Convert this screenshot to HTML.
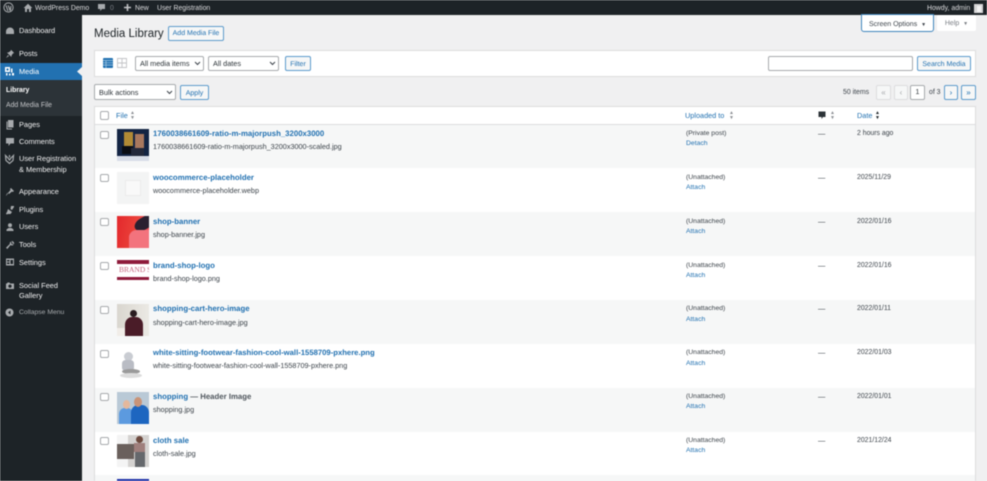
<!DOCTYPE html>
<html><head><meta charset="utf-8"><style>
html,body{margin:0;padding:0;width:987px;height:481px;overflow:hidden;background:#f0f0f1}
body{font-family:"Liberation Sans",sans-serif;font-size:7.3px;color:#3c434a;position:relative}
#w{position:absolute;left:0;top:0;width:987px;height:481px;overflow:hidden;filter:blur(.55px)}
#w div,#w span.a,#w svg{position:absolute}
.t{white-space:nowrap;line-height:10px;height:10px}
.m{color:#f0f0f1;left:19px;font-size:7.4px}
.btn{box-sizing:border-box;border:1px solid #5d9bcc;border-radius:2px;background:#f6f7f7;color:#2271b1;text-align:center;font-size:7px;white-space:nowrap;text-rendering:geometricPrecision}
.sel{box-sizing:border-box;border:1px solid #a7aaad;border-radius:2px;background:#fff;color:#2c3338;font-size:7.3px;padding-left:4px;white-space:nowrap}
.row{left:95px;width:880px;height:44px}
.g{background:#f6f7f7}
.cb{box-sizing:border-box;left:5px;top:5.5px;width:8.5px;height:8px;border:1px solid #a7aaad;border-radius:2px;background:#fff}
.th{left:22px;top:4px;width:32px;height:32px;overflow:hidden}
.tt{left:58px;top:4px;font-weight:bold;color:#2271b1;font-size:7.8px;text-rendering:geometricPrecision}
.fn{left:58px;top:17.5px;color:#3c434a;font-size:7.25px}
.up{left:591px;top:4px;font-size:6.8px}
.at{left:591px;top:14.5px;font-size:6.8px;color:#2271b1}
.da{left:723px;top:4px}
.dt{left:762px;top:4px;font-size:6.9px}
.s .tt,.s .up,.s .dt,.s .da{top:5px}
.pg{box-sizing:border-box;top:85px;height:15px;border-radius:2px;text-align:center;line-height:14px;font-size:8px}
.ic{fill:#a7aaad}
</style></head><body><div id="w">

<div style="left:0;top:0;width:987px;height:15px;background:#1d2327"></div>
<div style="left:0;top:15px;width:82px;height:466px;background:#1d2327"></div>

<svg style="left:3px;top:2px" width="11" height="11" viewBox="0 0 11 11"><circle cx="5.5" cy="5.5" r="4.6" fill="none" stroke="#a7aaad" stroke-width="1"/><path d="M3 3.4 5 9M5.2 3.4 7.3 9M7.9 4 7.5 8" stroke="#a7aaad" stroke-width="1.1" fill="none"/></svg>
<svg style="left:23px;top:3px" width="10" height="10" viewBox="0 0 10 10"><path class="ic" d="M5 .8 9.4 5H8v4H6V6H4v3H2V5H.6z"/></svg>
<div class="t" style="left:35px;top:3.500px;color:#dcdcde;font-size:6.9px">WordPress Demo</div>
<svg style="left:97px;top:3px" width="9" height="9" viewBox="0 0 9 9"><path class="ic" d="M1 1h7v5H5L3.2 8V6H1z"/></svg>
<div class="t" style="left:110px;top:3.500px;color:#787c82;font-size:6.9px">0</div>
<svg style="left:123px;top:3px" width="9" height="9" viewBox="0 0 9 9"><path d="M4.5 1v7M1 4.5h7" stroke="#c3c4c7" stroke-width="1.6"/></svg>
<div class="t" style="left:135px;top:3.500px;color:#dcdcde;font-size:6.9px">New</div>
<div class="t" style="left:157px;top:3.500px;color:#dcdcde;font-size:6.9px">User Registration</div>
<div class="t" style="left:927px;top:3.500px;color:#dcdcde;font-size:6.9px">Howdy, admin</div>
<div style="left:974px;top:4px;width:9px;height:9px;background:#d5d5d6"></div>
<div style="left:976.5px;top:5.5px;width:4px;height:6px;background:#f3f3f3"></div>

<div style="left:0;top:63px;width:82px;height:17px;background:#2271b1"></div>
<div style="left:0;top:80px;width:82px;height:36px;background:#2c3338"></div>
<svg style="left:77px;top:67px" width="5" height="9" viewBox="0 0 5 9"><path d="M5 0v9L0 4.5z" fill="#f0f0f1"/></svg>

<svg style="left:5px;top:26px" width="10" height="10" viewBox="0 0 10 10"><path class="ic" d="M1 8V5.5a4 4 0 0 1 8 0V8zM5 3.8 6.4 2.6 5.6 5A1 1 0 1 1 5 3.8z"/></svg>
<div class="t m" style="top:25.5px">Dashboard</div>
<svg style="left:5px;top:49px" width="10" height="10" viewBox="0 0 10 10"><path class="ic" d="M6 .8 9.2 4 8 4.4 6.6 6.4 6.4 8 2 3.6l1.6-.2L5.6 2zM3 6 1 9l3-2z"/></svg>
<div class="t m" style="top:49px">Posts</div>
<svg style="left:4px;top:66px" width="11" height="11" viewBox="0 0 11 11"><path fill="#fff" d="M1 1h5v5H1zM7 2.500h1.500V6.500H7zM2 7h1.500v2.500H2zM5 7.500h1.500v2H5zM8 7h2v2.500H8z"/><path fill="#2271b1" d="M2.500 2.500h2v2h-2z"/></svg>
<div class="t m" style="top:66.5px;color:#fff">Media</div>
<div class="t" style="left:6px;top:86px;color:#fff;font-weight:bold;font-size:6.9px">Library</div>
<div class="t" style="left:6px;top:100.500px;color:#c3c4c7;font-size:6.9px">Add Media File</div>
<svg style="left:5px;top:119px" width="10" height="11" viewBox="0 0 10 11"><path class="ic" d="M3 1h5.500v7.500H3zM1.500 2.500h1V9.500H7v1H1.500z"/></svg>
<div class="t m" style="top:119.500px">Pages</div>
<svg style="left:5px;top:137px" width="10" height="10" viewBox="0 0 10 10"><path class="ic" d="M1 1h8v5.500H5.500L3.500 9V6.500H1z"/></svg>
<div class="t m" style="top:137px">Comments</div>
<svg style="left:4px;top:154px" width="11" height="11" viewBox="0 0 11 11"><path d="M1.500 1.500 2 6.500 5.500 9.500 9 6.500 9.500 1.500 7 4 5.500 6 4 4zM5.500 1v2.500" fill="none" stroke="#a7aaad" stroke-width="1.200"/></svg>
<div class="t m" style="top:154px">User Registration</div>
<div class="t m" style="top:164.500px">&amp; Membership</div>
<svg style="left:5px;top:187px" width="10" height="10" viewBox="0 0 10 10"><path class="ic" d="M6 1 9 4 7.800 5 7 4.500 4 7 3 6l2.500-3L5 2zM3 6.500 1 9l.2-1L2.500 5.700z"/></svg>
<div class="t m" style="top:187px">Appearance</div>
<svg style="left:5px;top:205px" width="10" height="10" viewBox="0 0 10 10"><path class="ic" d="M6 1h3v1L7 5 5.500 4zM3 4l4 3-1.500 2H3L1.500 9.500 1 8.500 2 7z"/></svg>
<div class="t m" style="top:205px">Plugins</div>
<svg style="left:5px;top:222px" width="10" height="10" viewBox="0 0 10 10"><path class="ic" d="M1.500 9V7.500L3.500 6h3l2 1.500V9z"/><circle class="ic" cx="5" cy="3.300" r="2"/></svg>
<div class="t m" style="top:222px">Users</div>
<svg style="left:5px;top:240px" width="10" height="10" viewBox="0 0 10 10"><path class="ic" d="M6.500 1a2.500 2.500 0 0 1 2.600 3L7.500 3.500 7 2zM6 1.500 6.500 4 8.800 4.500A2.600 2.600 0 0 1 5.500 5L2.300 9 1 7.700 4.800 4A2.500 2.500 0 0 1 6 1.500z"/></svg>
<div class="t m" style="top:240px">Tools</div>
<svg style="left:5px;top:257px" width="10" height="10" viewBox="0 0 10 10"><path class="ic" d="M1 1.500h8v7H1zM2 3v1.500h2.500V3zM5.500 3v4h2.500V3zM2 5.500V7h2.500V5.500z"/></svg>
<div class="t m" style="top:257.500px">Settings</div>
<svg style="left:5px;top:281px" width="10" height="10" viewBox="0 0 10 10"><path class="ic" d="M1 2.500h1l.5-1h2l.5 1h4v5.500H1zM5 3.500a1.700 1.700 0 1 0 .01 0z"/></svg>
<div class="t m" style="top:281px">Social Feed</div>
<div class="t m" style="top:290.500px">Gallery</div>
<svg style="left:5px;top:308px" width="9" height="9" viewBox="0 0 9 9"><circle class="ic" cx="4.500" cy="4.500" r="4"/><path d="M5.500 2.500v4l-2.500-2z" fill="#1d2327"/></svg>
<div class="t" style="left:19px;top:307.500px;color:#a7aaad;font-size:6.800px">Collapse Menu</div>

<div class="btn" style="left:861px;top:14px;width:73px;height:18px;background:#fff;color:#3c434a;border-color:#3f85bd;border-radius:0 0 3px 3px;line-height:19px">Screen Options &nbsp;<span style="font-size:5px">▼</span></div>
<div class="btn" style="left:937px;top:15px;width:39px;height:16px;background:#fff;color:#787c82;border:0;line-height:18px">Help &nbsp;<span style="font-size:5px">▼</span></div>

<div class="t" style="left:94px;top:27.500px;font-size:11.500px;line-height:13px;height:13px;color:#1d2327">Media Library</div>
<div class="btn" style="left:168px;top:26px;width:56px;height:15px;line-height:14.500px">Add Media File</div>

<div style="box-sizing:border-box;left:94px;top:50px;width:882px;height:27px;background:#fff;border:1px solid #dcdcde"></div>
<svg style="left:103px;top:58px" width="10" height="10" viewBox="0 0 10 10"><rect width="10" height="10" rx="1" fill="#2271b1"/><path d="M0 2.500h10M0 4.800h10M0 7.100h10M3 2.500V10" stroke="#a8cbe4" stroke-width=".7"/></svg>
<svg style="left:117px;top:58px" width="10" height="10" viewBox="0 0 10 10"><path d="M.5.500h9v9h-9zM5 .500v9M.5 5h9" fill="none" stroke="#c3c4c7" stroke-width=".9"/></svg>
<div class="sel" style="left:135px;top:55.500px;width:69px;height:15.500px;line-height:14px">All media items</div>
<div class="sel" style="left:208px;top:55.500px;width:71px;height:15.500px;line-height:14px">All dates</div>
<svg style="left:194px;top:61px" width="7" height="5" viewBox="0 0 7 5"><path d="M1 1l2.500 2.500L6 1" fill="none" stroke="#3c434a"/></svg>
<svg style="left:269px;top:61px" width="7" height="5" viewBox="0 0 7 5"><path d="M1 1l2.500 2.500L6 1" fill="none" stroke="#3c434a"/></svg>
<div class="btn" style="left:285px;top:55.500px;width:26px;height:15.500px;line-height:15px">Filter</div>
<div style="box-sizing:border-box;left:768px;top:55.500px;width:145px;height:15.500px;background:#fff;border:1px solid #a7aaad;border-radius:2px"></div>
<div class="btn" style="left:917px;top:55.500px;width:54px;height:15.500px;line-height:15px">Search Media</div>

<div class="sel" style="left:94px;top:84px;width:82px;height:16px;line-height:15px">Bulk actions</div>
<svg style="left:166px;top:90px" width="7" height="5" viewBox="0 0 7 5"><path d="M1 1l2.500 2.500L6 1" fill="none" stroke="#3c434a"/></svg>
<div class="btn" style="left:180px;top:84.500px;width:29px;height:15.500px;line-height:15px">Apply</div>

<div class="t" style="left:843px;top:87.500px;font-size:6.900px">50 items</div>
<div class="pg" style="left:876px;width:15px;border:1px solid #dcdcde;background:#f6f7f7;color:#a7aaad">«</div>
<div class="pg" style="left:894px;width:14px;border:1px solid #dcdcde;background:#f6f7f7;color:#a7aaad">‹</div>
<div class="pg" style="left:910px;width:15px;border:1px solid #a7aaad;background:#fff;color:#2c3338;font-size:7px">1</div>
<div class="t" style="left:929px;top:87.500px;font-size:6.900px">of 3</div>
<div class="pg btn" style="left:944px;width:14px;font-size:8px">›</div>
<div class="pg btn" style="left:961px;width:15px;font-size:8px">»</div>

<div style="box-sizing:border-box;left:94px;top:106px;width:882px;height:375px;background:#fff;border:1px solid #dcdcde;border-bottom:0"></div>
<div style="left:95px;top:124px;width:880px;height:1px;background:#dcdcde"></div>
<div class="cb" style="left:100px;top:111px;width:8.500px;height:8.500px"></div>
<div class="t" style="left:116px;top:110.500px;color:#2271b1">File</div>
<div class="t" style="left:130px;top:111px;color:#8c8f94;font-size:5px;line-height:5px">▲<br>▼</div>
<div class="t" style="left:685px;top:110.500px;color:#2271b1">Uploaded to</div>
<div class="t" style="left:729px;top:111px;color:#8c8f94;font-size:5px;line-height:5px">▲<br>▼</div>
<svg style="left:818px;top:111px" width="8" height="9" viewBox="0 0 8 9"><path d="M.5 .5h7v5.500H5L3.500 8V6H.5z" fill="#2c3338"/></svg>
<div class="t" style="left:830px;top:111px;color:#8c8f94;font-size:5px;line-height:5px">▲<br>▼</div>
<div class="t" style="left:857px;top:110.500px;color:#2271b1">Date</div>
<div class="t" style="left:875px;top:111px;color:#1d2327;font-size:5px;line-height:5px">▲<br>▼</div>

<div class="row g" style="top:125px;height:43px">
<div class="cb"></div>
<div class="th" style="background:#132443"><div style="left:7px;top:3px;width:9px;height:15px;background:#b08a35"></div><div style="left:18px;top:5px;width:9px;height:15px;background:#a8785e"></div><div style="left:5px;top:17px;width:11px;height:8px;background:#0a0d14"></div><div style="left:14px;top:19px;width:13px;height:8px;background:#23283a"></div><div style="left:0;top:27px;width:32px;height:5px;background:#d8dde8"></div></div>
<div class="t tt" style="top:3.500px">1760038661609-ratio-m-majorpush_3200x3000</div><div class="t fn" style="top:16.500px">1760038661609-ratio-m-majorpush_3200x3000-scaled.jpg</div>
<div class="t up" style="top:3.500px">(Private post)</div><div class="t at" style="top:13.500px">Detach</div><div class="t da">—</div><div class="t dt" style="top:3.500px">2 hours ago</div></div>

<div class="row s" style="top:168px">
<div class="cb"></div>
<div class="th" style="background:#f3f4f4"><div style="left:8px;top:8px;width:16px;height:16px;background:#f9f9f9;border:1px solid #ebebeb;box-sizing:border-box"></div></div>
<div class="t tt">woocommerce-placeholder</div><div class="t fn">woocommerce-placeholder.webp</div>
<div class="t up">(Unattached)</div><div class="t at">Attach</div><div class="t da">—</div><div class="t dt">2025/11/29</div></div>

<div class="row g s" style="top:212px">
<div class="cb"></div>
<div class="th" style="background:linear-gradient(100deg,#e3282c 0%,#ea3f38 50%,#ef5a66 100%)"><div style="left:17px;top:2px;width:18px;height:12px;background:#2a2030;border-radius:50% 0 0 50%;transform:rotate(-30deg)"></div><div style="left:12px;top:14px;width:20px;height:18px;background:#f3737d;border-radius:40% 0 0 0"></div></div>
<div class="t tt">shop-banner</div><div class="t fn">shop-banner.jpg</div>
<div class="t up">(Unattached)</div><div class="t at">Attach</div><div class="t da">—</div><div class="t dt">2022/01/16</div></div>

<div class="row s" style="top:256px">
<div class="cb"></div>
<div class="th" style="height:20px;background:#fff"><div style="left:0;top:0;width:32px;height:3.500px;background:#8e1b3b"></div><div style="left:0;top:16.500px;width:32px;height:3.500px;background:#8e1b3b"></div><div class="t" style="left:2px;top:5px;font-family:'Liberation Serif',serif;font-size:7.500px;color:#c4647d">BRAND SH</div></div>
<div class="t tt">brand-shop-logo</div><div class="t fn">brand-shop-logo.png</div>
<div class="t up">(Unattached)</div><div class="t at">Attach</div><div class="t da">—</div><div class="t dt">2022/01/16</div></div>

<div class="row g" style="top:300px">
<div class="cb"></div>
<div class="th" style="background:linear-gradient(90deg,#d9d6cf,#ebe9e4)"><div style="left:13px;top:6px;width:7px;height:7px;background:#2a1c20;border-radius:50%"></div><div style="left:8px;top:13px;width:18px;height:19px;background:#4a1c28;border-radius:40% 40% 0 0"></div><div style="left:0;top:24px;width:8px;height:8px;background:#f1ede8"></div></div>
<div class="t tt">shopping-cart-hero-image</div><div class="t fn">shopping-cart-hero-image.jpg</div>
<div class="t up">(Unattached)</div><div class="t at">Attach</div><div class="t da">—</div><div class="t dt">2022/01/11</div></div>

<div class="row" style="top:344px">
<div class="cb"></div>
<div class="th" style="background:#fff"><div style="left:7px;top:4px;width:9px;height:9px;background:#c9ccd2;border-radius:50%"></div><div style="left:5px;top:12px;width:12px;height:11px;background:#b9bcc4;border-radius:30%"></div><div style="left:5px;top:21px;width:18px;height:5px;background:#9a9a9a;border-radius:50%"></div><div style="left:3px;top:25px;width:22px;height:5px;background:#dcdcdc;border-radius:50%"></div></div>
<div class="t tt" style="font-size:7.7px">white-sitting-footwear-fashion-cool-wall-1558709-pxhere.png</div><div class="t fn" style="top:16.500px">white-sitting-footwear-fashion-cool-wall-1558709-pxhere.png</div>
<div class="t up">(Unattached)</div><div class="t at">Attach</div><div class="t da">—</div><div class="t dt">2022/01/03</div></div>

<div class="row g" style="top:387.500px">
<div class="cb"></div>
<div class="th" style="background:#b9c9d6"><div style="left:2px;top:16px;width:14px;height:16px;background:#5c9adf;border-radius:40% 40% 0 0"></div><div style="left:14px;top:13px;width:18px;height:19px;background:#1d66c0;border-radius:40% 40% 0 0"></div><div style="left:6px;top:8px;width:7px;height:9px;background:#e4b89c;border-radius:50%"></div><div style="left:17px;top:5px;width:8px;height:10px;background:#c99478;border-radius:50%"></div></div>
<div class="t tt">shopping <span style="color:#50575e">— Header Image</span></div><div class="t fn">shopping.jpg</div>
<div class="t up">(Unattached)</div><div class="t at">Attach</div><div class="t da">—</div><div class="t dt">2022/01/01</div></div>

<div class="row s" style="top:431px">
<div class="cb"></div>
<div class="th" style="background:#f4f4f4"><div style="left:11px;top:0;width:21px;height:32px;background:#d4d2d0"></div><div style="left:0;top:9px;width:17px;height:15px;background:#6a605c"></div><div style="left:19px;top:1px;width:7px;height:7px;background:#6d4a3e;border-radius:50%"></div><div style="left:17px;top:8px;width:11px;height:9px;background:#9f7f7c"></div><div style="left:18px;top:17px;width:10px;height:15px;background:#65686c"></div></div>
<div class="t tt">cloth sale</div><div class="t fn">cloth-sale.jpg</div>
<div class="t up">(Unattached)</div><div class="t at">Attach</div><div class="t da">—</div><div class="t dt">2021/12/24</div></div>

<div class="row g" style="top:475px;height:6px;overflow:hidden">
<div class="cb"></div>
<div class="th" style="background:#1c2fa8"></div>
</div>
</div></body></html>
